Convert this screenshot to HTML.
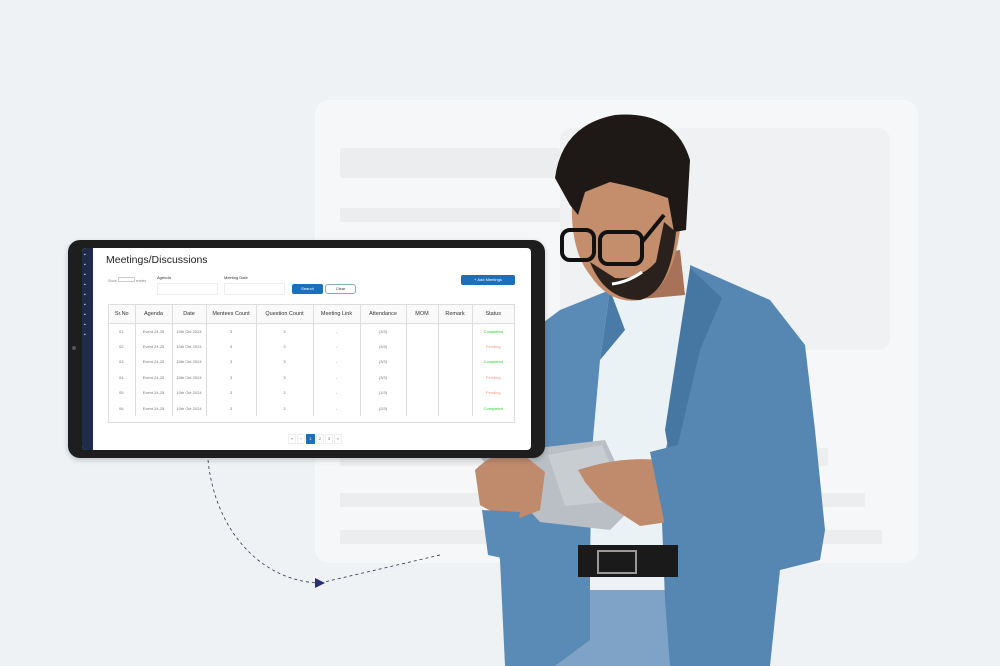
<!DOCTYPE html>
<html><head><meta charset="utf-8"><style>
*{margin:0;padding:0;box-sizing:border-box}
body{width:1000px;height:666px;overflow:hidden;background:#eef2f4;font-family:"Liberation Sans",sans-serif;position:relative}
.abs{position:absolute}
.tbl{position:absolute;left:108px;top:304px;width:407px;height:119px;border:1px solid #ddd;font-size:5.5px;color:#333}
.tbl table{border-collapse:collapse;width:100%}
.tbl td,.tbl th{border-right:1px solid #ddd;text-align:center;font-weight:normal;color:#777;font-size:4px;height:15.5px}
.tbl th{height:18px;font-size:5.5px;color:#333;border-bottom:1px solid #ddd;background:#fafafa}
.c{color:#3c3!important}.p{color:#e98!important}
</style></head><body>
<div class="abs" style="left:315px;top:100px;width:603px;height:463px;background:#f5f7f8;border-radius:14px"></div>
<div class="abs" style="left:560px;top:128px;width:330px;height:222px;background:#eff1f2;border-radius:12px"></div>
<div class="abs" style="left:340px;top:148px;width:220px;height:30px;background:#ebedee;border-radius:3px"></div>
<div class="abs" style="left:340px;top:208px;width:220px;height:14px;background:#ebedee"></div>
<div class="abs" style="left:340px;top:448px;width:488px;height:18px;background:#eceeef"></div>
<div class="abs" style="left:340px;top:493px;width:525px;height:14px;background:#ebedee"></div>
<div class="abs" style="left:340px;top:530px;width:542px;height:14px;background:#ebedee"></div>

<svg class="abs" style="left:0;top:0" width="1000" height="666">
<path d="M440 555 L320 583" stroke="#334" stroke-dasharray="3,3" fill="none" stroke-width="0.8"/>
<path d="M208 460 C215 530 260 580 318 583" stroke="#334" stroke-dasharray="3,3" fill="none" stroke-width="0.8"/>
<polygon points="315,578 325,583 315,588" fill="#2a2f7a"/>
<!-- trousers -->
<polygon points="560,590 690,590 700,666 555,666" fill="#7fa3c6"/>
<!-- shirt -->
<path d="M600 290 L640 280 L695 268 L690 560 L580 560 L588 400 Z" fill="#eaf2f6"/>
<!-- jacket left -->
<path d="M560 310 L610 290 L600 360 L592 450 L590 560 L590 640 L555 666 L505 666 L500 560 L490 520 L505 420 L520 340 Z" fill="#5a8bb6"/>
<!-- jacket right -->
<path d="M690 265 L770 300 L805 345 L815 430 L825 530 L820 560 L780 570 L770 666 L670 666 L665 600 L660 470 L690 360 Z" fill="#5686b2"/>
<path d="M690 268 L722 298 L700 350 L672 470 L665 430 Z" fill="#4676a2"/>
<path d="M610 290 L600 360 L625 330 Z" fill="#4a7aa6"/>
<!-- belt -->
<rect x="578" y="545" width="100" height="32" fill="#1a1a1a"/>
<rect x="598" y="551" width="38" height="22" fill="none" stroke="#999" stroke-width="2"/>
<!-- neck & face -->
<path d="M620 260 L680 250 L685 295 L630 300 Z" fill="#a87258"/>
<path d="M572 200 Q570 250 590 275 Q610 305 640 300 Q672 290 680 230 L684 185 L600 170 Z" fill="#c48d6b"/>
<path d="M590 262 Q605 300 640 300 Q670 292 676 232 L664 222 L656 262 Q640 280 615 278 Z" fill="#2a211c"/>
<path d="M612 284 Q628 282 642 272" stroke="#fff" stroke-width="3" fill="none"/>
<path d="M555 178 Q562 125 615 115 Q675 110 690 160 L686 230 L674 232 L668 198 Q640 188 610 182 L585 192 L578 215 L570 205 Z" fill="#1e1916"/>
<!-- glasses -->
<rect x="562" y="230" width="32" height="30" rx="8" fill="none" stroke="#111" stroke-width="4"/>
<rect x="600" y="232" width="42" height="32" rx="8" fill="none" stroke="#111" stroke-width="4"/>
<path d="M642 242 L664 215" stroke="#111" stroke-width="4"/>
<!-- held tablet -->
<polygon points="478,455 605,440 635,505 610,530 540,522" fill="#b9bfc4"/>
<polygon points="548,455 602,445 625,500 565,506" fill="#c8cdd1"/>
<!-- hands -->
<path d="M475 470 Q495 450 520 452 L545 472 L540 510 L510 522 L480 505 Z" fill="#c08a6d"/>
<path d="M578 470 Q620 456 660 460 L690 480 L682 520 L640 526 L600 500 L585 482 Z" fill="#c08a6d"/>
<path d="M650 452 L705 438 L702 530 L668 540 Z" fill="#5686b2"/>
<path d="M482 510 L520 512 L512 560 L488 555 Z" fill="#5a8bb6"/>
</svg>

<div class="abs" style="left:68px;top:240px;width:477px;height:218px;background:#1e1e1e;border-radius:12px;box-shadow:0 2px 6px rgba(0,0,0,.2)"></div>
<div class="abs" style="left:72px;top:346px;width:4px;height:4px;border-radius:2px;background:#555"></div>
<div class="abs" style="left:82px;top:248px;width:449px;height:202px;background:#fff;border-radius:4px;overflow:hidden">
 <div style="position:absolute;left:0;top:0;width:11px;height:202px;background:#1f2b4a"></div>
</div>
<div class="abs" style="left:84px;top:250px;width:7px;font-size:5px;color:#cdd;line-height:10px">▪<br>▪<br>▪<br>▪<br>▪<br>▪<br>▪<br>▪<br>▪</div>
<div class="abs" style="left:106px;top:254px;font-size:10.5px;color:#222">Meetings/Discussions</div>
<div class="abs" style="left:108px;top:277px;font-size:3.5px;color:#888">Show <span style="display:inline-block;width:17px;height:5px;border:1px solid #ccc"></span> entries</div>
<div class="abs" style="left:157px;top:275px;font-size:4px;color:#333">Agenda</div>
<div class="abs" style="left:157px;top:283px;width:61px;height:12px;border:1px solid #eee"></div>
<div class="abs" style="left:224px;top:275px;font-size:4px;color:#333">Meeting Date</div>
<div class="abs" style="left:224px;top:283px;width:61px;height:12px;border:1px solid #eee"></div>
<div class="abs" style="left:292px;top:284px;width:31px;height:10px;background:#1f6fb8;border-radius:2px;color:#fff;font-size:4px;text-align:center;line-height:10px">Search</div>
<div class="abs" style="left:325px;top:284px;width:31px;height:10px;border:1px solid #8ab;border-radius:3px;font-size:4px;text-align:center;line-height:8px;color:#333">Clear</div>
<div class="abs" style="left:461px;top:275px;width:54px;height:10px;background:#1f6fb8;border-radius:2px;color:#fff;font-size:4px;text-align:center;line-height:10px">+ Add Meetings</div>
<div class="tbl"><table>
<tr><th style="width:26px">Sr.No</th><th style="width:37px">Agenda</th><th style="width:34px">Date</th><th style="width:50px">Mentees Count</th><th style="width:57px">Question Count</th><th style="width:47px">Meeting Link</th><th style="width:46px">Attendance</th><th style="width:32px">MOM</th><th style="width:34px">Remark</th><th style="border-right:0">Status</th></tr>
<tr><td>01.</td><td>Event 24-25</td><td>10th Oct 2024</td><td>3</td><td>3</td><td>-</td><td>(3/3)</td><td></td><td></td><td class="c" style="border-right:0">Completed</td></tr>
<tr><td>02.</td><td>Event 24-25</td><td>10th Oct 2024</td><td>3</td><td>3</td><td>-</td><td>(3/3)</td><td></td><td></td><td class="p" style="border-right:0">Pending</td></tr>
<tr><td>03.</td><td>Event 24-25</td><td>10th Oct 2024</td><td>3</td><td>3</td><td>-</td><td>(3/3)</td><td></td><td></td><td class="c" style="border-right:0">Completed</td></tr>
<tr><td>04.</td><td>Event 24-25</td><td>10th Oct 2024</td><td>3</td><td>3</td><td>-</td><td>(3/3)</td><td></td><td></td><td class="p" style="border-right:0">Pending</td></tr>
<tr><td>05.</td><td>Event 24-25</td><td>10th Oct 2024</td><td>3</td><td>3</td><td>-</td><td>(1/3)</td><td></td><td></td><td class="p" style="border-right:0">Pending</td></tr>
<tr><td>06.</td><td>Event 24-25</td><td>10th Oct 2024</td><td>3</td><td>3</td><td>-</td><td>(2/3)</td><td></td><td></td><td class="c" style="border-right:0">Completed</td></tr>
</table></div>
<div class="abs" style="left:288px;top:434px;font-size:4px;color:#666;display:flex;gap:1px">
<span style="width:8px;height:10px;border:1px solid #eee;text-align:center;line-height:8px">«</span>
<span style="width:8px;height:10px;border:1px solid #eee;text-align:center;line-height:8px">‹</span>
<span style="width:9px;height:10px;background:#1f6fb8;color:#fff;text-align:center;line-height:10px">1</span>
<span style="width:8px;height:10px;border:1px solid #eee;text-align:center;line-height:8px">2</span>
<span style="width:8px;height:10px;border:1px solid #eee;text-align:center;line-height:8px">3</span>
<span style="width:8px;height:10px;border:1px solid #eee;text-align:center;line-height:8px">»</span>
</div>
</body></html>
